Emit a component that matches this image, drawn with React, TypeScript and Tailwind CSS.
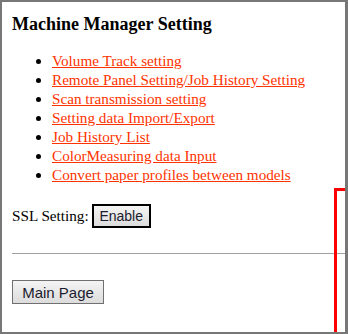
import React from "react";

const links = [
  "Volume Track setting",
  "Remote Panel Setting/Job History Setting",
  "Scan transmission setting",
  "Setting data Import/Export",
  "Job History List",
  "ColorMeasuring data Input",
  "Convert paper profiles between models",
];

const btn =
  "bg-gradient-to-b from-[#f4f4f4] to-[#dcdcdc] text-[#1b1b2e] leading-none font-['Liberation_Sans',Arial,sans-serif]";

export default function App() {
  return (
    <div className="relative w-[348px] h-[334px] overflow-hidden border-t-2 border-l-2 border-b-2 border-r-[3px] border-[#777777] bg-white font-['Liberation_Serif','Times_New_Roman',serif] text-black">
      <div className="pl-[10px] pt-[11px]">
        <h3 className="text-[18px] font-bold leading-[22px]">Machine Manager Setting</h3>

        <ul className="mt-[16px] pl-[40px] list-disc text-[15.2px] leading-[19px]">
          {links.map((l) => (
            <li key={l}>
              <a href="#" className="text-[#ff3300] underline decoration-[#ff3300]">
                {l}
              </a>
            </li>
          ))}
        </ul>

        <div className="mt-[20px] flex items-center text-[15.2px]">
          <span>SSL Setting:</span>
          <button className={`${btn} ml-[3px] h-[24px] w-[59px] border-2 border-black text-[14px]`}>Enable</button>
        </div>

        <hr className="mt-[25px] border-t border-[#a0a0a0] -mr-[4px]" />

        <button className={`${btn} mt-[26px] h-[24px] w-[92px] border border-[#707070] text-[15px]`}>Main Page</button>
      </div>

      {/* red highlight frame, partly out of view */}
      <div className="absolute left-[332px] top-[186px] w-[20px] h-[200px] border-t-[3px] border-l-[3px] border-[#ff0000]" />
    </div>
  );
}
